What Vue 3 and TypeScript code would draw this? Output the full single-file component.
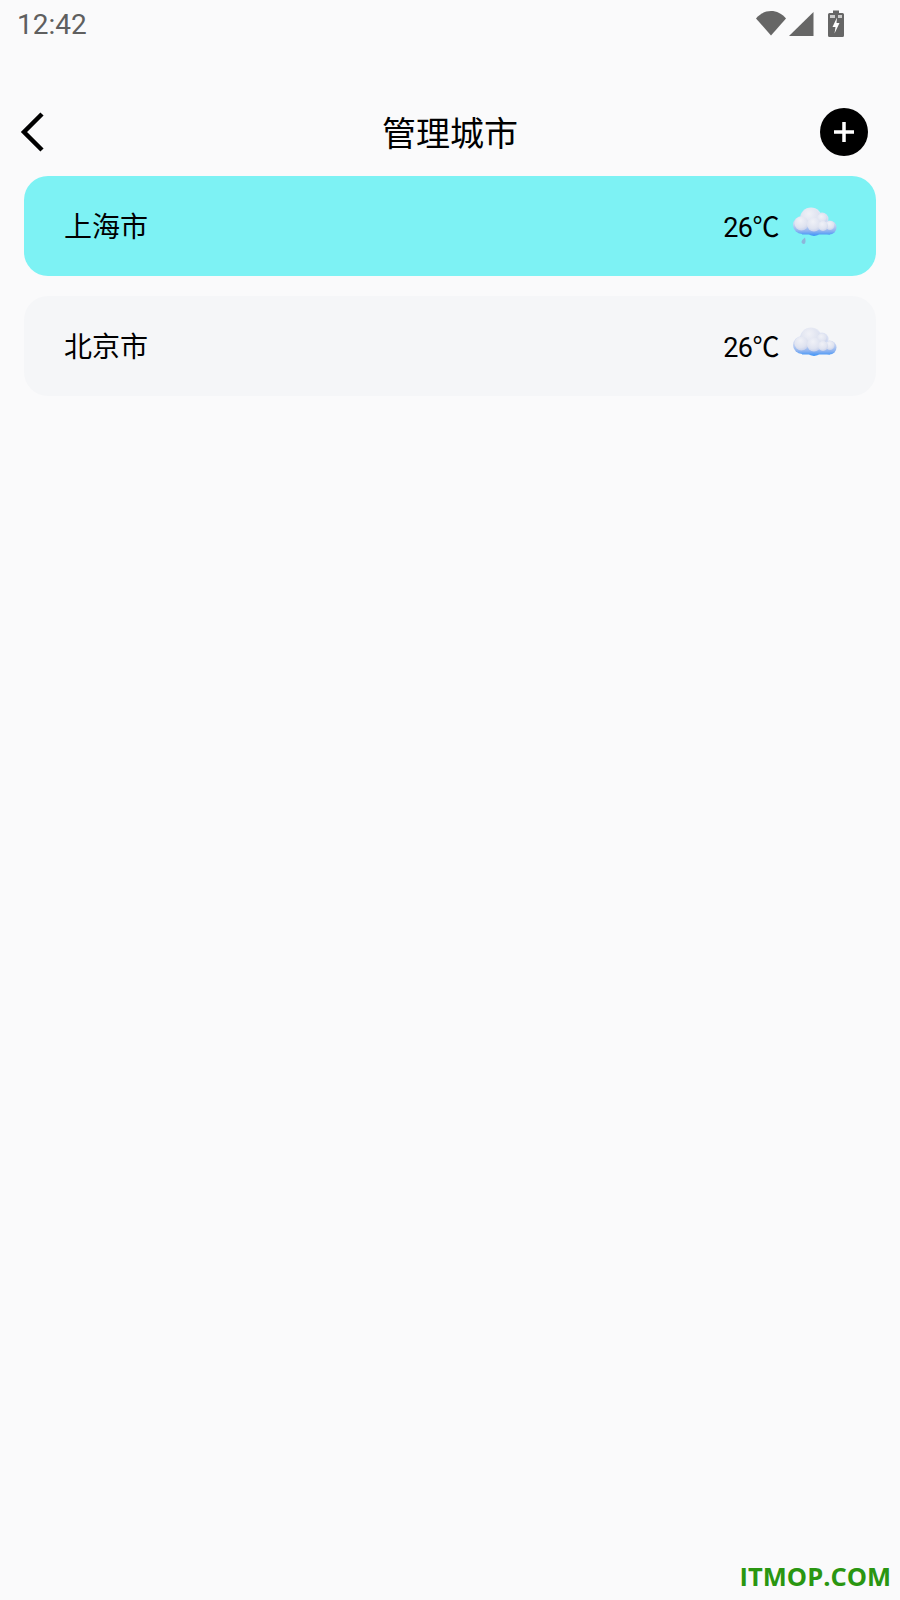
<template>
  <div class="page">
    <div class="status-bar">
      <span class="time">12:42</span>
      <div class="status-icons">
        <svg class="wifi" width="32" height="26" viewBox="0 0 32 26"><path d="M1 8.500C9 -1.500 23 -1.500 31 8.500L16 25.500Z" fill="#666" /></svg>
        <svg class="signal" width="26" height="26" viewBox="0 0 26 26"><path d="M25.500 2V26H1Z" fill="#666" /></svg>
        <svg class="battery" width="16" height="27" viewBox="0 0 16 27">
          <path d="M5 0.500H11V3H14.500A1.500 1.500 0 0 1 16 4.500V25.500A1.500 1.500 0 0 1 14.500 27H1.500A1.500 1.500 0 0 1 0 25.500V4.500A1.500 1.500 0 0 1 1.500 3H5Z" fill="#666" />
          <rect x="2" y="5" width="5" height="3" fill="#ccc" />
          <rect x="10" y="5" width="4" height="3" fill="#ccc" />
          <path d="M9 7.500L4.500 17H7.500L6.500 23.500L11.500 13H8.500Z" fill="#fff" />
        </svg>
      </div>
    </div>

    <header class="top-bar">
      <div class="back">
        <svg width="26" height="42" viewBox="0 0 26 42"><path d="M23 3L5 21L23 39" fill="none" stroke="#000" stroke-width="4.500" /></svg>
      </div>
      <h1 class="title">管理城市</h1>
      <div class="add">
        <span class="add-btn">
          <svg width="22" height="22" viewBox="0 0 22 22"><path d="M11 1V21M1 11H21" stroke="#fff" stroke-width="3.500" /></svg>
        </span>
      </div>
    </header>

    <div class="city-list">
      <div v-for="city in cities" :key="city.name" class="city-card" :class="{ active: city.active }">
        <span class="city-name">{{ city.name }}</span>
        <div class="weather">
          <span class="temp">{{ city.temp }}</span>
          <svg class="cloud" width="48" height="44" viewBox="0 0 48 44">
            <defs>
              <linearGradient id="body" gradientUnits="userSpaceOnUse" x1="0" y1="3" x2="0" y2="31">
                <stop offset="0" stop-color="#e6e9f3" />
                <stop offset="0.55" stop-color="#cfd9f2" />
                <stop offset="0.82" stop-color="#8fb4f0" />
                <stop offset="1" stop-color="#3a92f8" />
              </linearGradient>
              <radialGradient id="puff" cx="0.42" cy="0.3" r="0.75">
                <stop offset="0" stop-color="#f0f1f7" />
                <stop offset="0.65" stop-color="#dfe3f0" />
                <stop offset="1" stop-color="#c2cdeb" />
              </radialGradient>
            </defs>
            <g fill="url(#body)">
              <circle cx="21" cy="13.500" r="11" />
              <circle cx="12" cy="20" r="9" />
              <circle cx="32" cy="14" r="6.500" />
              <circle cx="39.500" cy="22.500" r="7" />
              <circle cx="24" cy="22" r="9" />
              <rect x="12" y="18" width="28" height="11.500" />
            </g>
            <circle cx="20.500" cy="12.500" r="9.500" fill="url(#puff)" />
            <circle cx="11.500" cy="18.500" r="7" fill="url(#puff)" />
            <circle cx="32" cy="13.500" r="5" fill="url(#puff)" />
            <circle cx="40" cy="20.500" r="4.500" fill="url(#puff)" />
            <circle cx="24" cy="19.500" r="7" fill="url(#puff)" />
            <circle cx="33" cy="21" r="5" fill="url(#puff)" />
            <path v-if="city.rain" d="M15 32.500C15.500 35 16 36.500 15 38.500C13.500 39.500 11.500 38.500 11.500 37C11.500 35.500 13 34 15 32.500Z" fill="#8cb6da" />
          </svg>
        </div>
      </div>
    </div>

    <span class="watermark">ITMOP.COM</span>
  </div>
</template>

<script setup lang="ts">
interface City {
  name: string
  temp: string
  active: boolean
  rain: boolean
}

const cities: City[] = [
  { name: '上海市', temp: '26℃', active: true, rain: true },
  { name: '北京市', temp: '26℃', active: false, rain: false },
]
</script>

<style>
html,
body {
  margin: 0;
  background: #fafafb;
}
</style>

<style scoped>
.page {
  position: relative;
  width: 900px;
  height: 1600px;
  background: #fafafb;
  font-family: Roboto, "Noto Sans CJK SC", sans-serif;
  color: #000;
  overflow: hidden;
}

.status-bar {
  display: flex;
  justify-content: space-between;
  align-items: flex-start;
  height: 100px;
  padding: 8px 56px 0 17px;
  box-sizing: border-box;
}

.time {
  font-size: 28px;
  line-height: 34px;
  font-weight: 400;
  color: #5f5f5f;
}

.status-icons {
  display: flex;
  align-items: flex-start;
  gap: 1px;
  padding-top: 2px;
}

.battery {
  margin-left: 13px;
}

.top-bar {
  display: grid;
  grid-template-columns: 1fr auto 1fr;
  align-items: center;
  height: 64px;
  padding: 0 32px;
}

.back svg {
  display: block;
  margin-left: -13px;
}

.title {
  margin: 0;
  padding-top: 4px;
  font-size: 34px;
  line-height: 44px;
  font-weight: 400;
}

.add {
  display: flex;
  justify-content: flex-end;
}

.add-btn {
  display: flex;
  align-items: center;
  justify-content: center;
  width: 48px;
  height: 48px;
  border-radius: 50%;
  background: #000;
}

.city-list {
  display: flex;
  flex-direction: column;
  gap: 20px;
  margin-top: 12px;
  padding: 0 24px;
}

.city-card {
  display: flex;
  justify-content: space-between;
  align-items: flex-start;
  box-sizing: border-box;
  height: 100px;
  padding: 29px 38px 0 40px;
  border-radius: 24px;
  background: #f5f6f8;
}

.city-card.active {
  background: #7df2f4;
}

.city-name {
  margin-top: 5px;
  font-size: 28px;
  line-height: 36px;
}

.weather {
  display: flex;
  align-items: flex-start;
  gap: 11px;
}

.temp {
  font-size: 27px;
  line-height: 46px;
  letter-spacing: -0.500px;
}

.cloud {
  display: block;
}

.watermark {
  position: absolute;
  right: 9px;
  bottom: 9px;
  font-family: "Open Sans", sans-serif;
  font-size: 25.500px;
  line-height: 30px;
  font-weight: 700;
  color: #2a9611;
}
</style>
